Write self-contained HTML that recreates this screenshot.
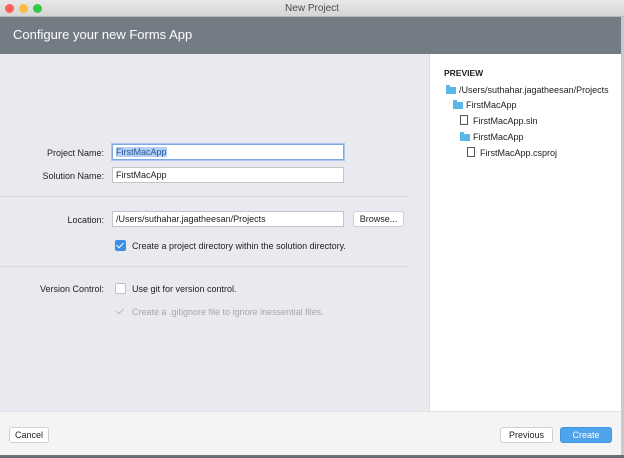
<!DOCTYPE html>
<html><head><meta charset="utf-8"><style>
*{box-sizing:border-box;margin:0;padding:0}
body{width:624px;height:458px;overflow:hidden;font-family:"Liberation Sans",sans-serif;font-size:9px;color:#222;background:#f4f4f4;position:relative}
.tb{position:absolute;left:0;top:0;width:624px;height:17px;background:linear-gradient(#e9e8e9,#d6d5d6);border-bottom:1px solid #b8b8b8;text-align:center;line-height:17px;font-size:10px;color:#4a4a4a}
.dot{position:absolute;top:4px;width:9px;height:9px;border-radius:50%}
.hd{position:absolute;left:0;top:17px;width:624px;height:37px;background:#737b84;color:#fff;font-size:13px;line-height:36px;padding-left:13px}
.main{position:absolute;left:0;top:54px;width:621px;height:357px;background:#e8eaef}
.pv{position:absolute;left:429px;top:54px;width:192px;height:357px;background:#fff;border-left:1px solid #dcdde0}
.foot{position:absolute;left:0;top:411px;width:621px;height:44px;background:#f4f4f4;border-top:1px solid #e2e2e2}
.rb{position:absolute;right:0;top:17px;width:3px;height:441px;background:#c9c9cc}
.bot{position:absolute;left:0;top:455px;width:624px;height:3px;background:#6b6f78}
.lbl{position:absolute;text-align:right;width:90px;font-size:9px;color:#222}
.in{position:absolute;height:16px;background:#fff;border:1px solid #c2c4c8;font-size:9px;line-height:14px;padding-left:3px}
.btn{position:absolute;height:16px;background:#fff;border:1px solid #cfd0d3;border-radius:3px;font-size:9px;line-height:14px;text-align:center;color:#222}
.cb{position:absolute;width:11px;height:11px;border-radius:2px}
.t{position:absolute;font-size:9px;white-space:nowrap}
.hr{position:absolute;left:0;width:408px;height:1px;background:#d6d8dc}
.fd{position:absolute;width:10px;height:7px;background:#5bb8e6}
.fd:before{content:"";position:absolute;left:0;top:-2px;width:4px;height:2px;background:#5bb8e6}
.fl{position:absolute;width:8px;height:10px;border:1px solid #555;background:#fff}
</style></head><body>
<div class="tb">New Project
<div class="dot" style="left:5px;background:#fc605c"></div>
<div class="dot" style="left:19px;background:#fdbc40"></div>
<div class="dot" style="left:33px;background:#34c84a"></div></div>
<div class="hd">Configure your new Forms App</div>
<div class="main">
<div class="lbl" style="left:14px;top:94px">Project Name:</div>
<div class="in" style="left:112px;top:90px;width:232px;border-color:#7fa8e0;box-shadow:0 0 0 1px #a9c6ef"><span style="background:#b3d0f5;color:#2a55a0">FirstMacApp</span></div>
<div class="lbl" style="left:14px;top:117px">Solution Name:</div>
<div class="in" style="left:112px;top:113px;width:232px">FirstMacApp</div>
<div class="hr" style="top:142px"></div>
<div class="lbl" style="left:14px;top:161px">Location:</div>
<div class="in" style="left:112px;top:157px;width:232px">/Users/suthahar.jagatheesan/Projects</div>
<div class="btn" style="left:353px;top:157px;width:51px">Browse...</div>
<div class="cb" style="left:115px;top:186px;background:#3b8fe6"><span style="position:absolute;left:3px;top:1px;width:4px;height:7px;border:solid #fff;border-width:0 1.5px 1.5px 0;transform:rotate(45deg)"></span></div>
<div class="t" style="left:132px;top:187px">Create a project directory within the solution directory.</div>
<div class="hr" style="top:212px"></div>
<div class="lbl" style="left:14px;top:230px">Version Control:</div>
<div class="cb" style="left:115px;top:229px;background:#fff;border:1px solid #bfc1c5"></div>
<div class="t" style="left:132px;top:230px">Use git for version control.</div>
<div class="cb" style="left:115px;top:252px"><span style="position:absolute;left:3px;top:1px;width:4px;height:7px;border:solid #bbb;border-width:0 1.5px 1.5px 0;transform:rotate(45deg)"></span></div>
<div class="t" style="left:132px;top:253px;color:#a5a7ab">Create a .gitignore file to ignore inessential files.</div>
</div>
<div class="pv">
<div class="t" style="left:14px;top:14px;font-weight:bold;font-size:8.5px">PREVIEW</div>
<div class="fd" style="left:16px;top:33px"></div><div class="t" style="left:29px;top:31px">/Users/suthahar.jagatheesan/Projects</div>
<div class="fd" style="left:23px;top:48px"></div><div class="t" style="left:36px;top:46px">FirstMacApp</div>
<div class="fl" style="left:30px;top:61px"></div><div class="t" style="left:43px;top:62px">FirstMacApp.sln</div>
<div class="fd" style="left:30px;top:80px"></div><div class="t" style="left:43px;top:78px">FirstMacApp</div>
<div class="fl" style="left:37px;top:93px"></div><div class="t" style="left:50px;top:94px">FirstMacApp.csproj</div>
</div>
<div class="foot">
<div class="btn" style="left:9px;top:15px;width:40px">Cancel</div>
<div class="btn" style="left:500px;top:15px;width:53px">Previous</div>
<div class="btn" style="left:560px;top:15px;width:52px;background:#4da3ec;border-color:#4096e0;color:#fff">Create</div>
</div>
<div class="rb"></div>
<div class="bot"></div>
</body></html>
